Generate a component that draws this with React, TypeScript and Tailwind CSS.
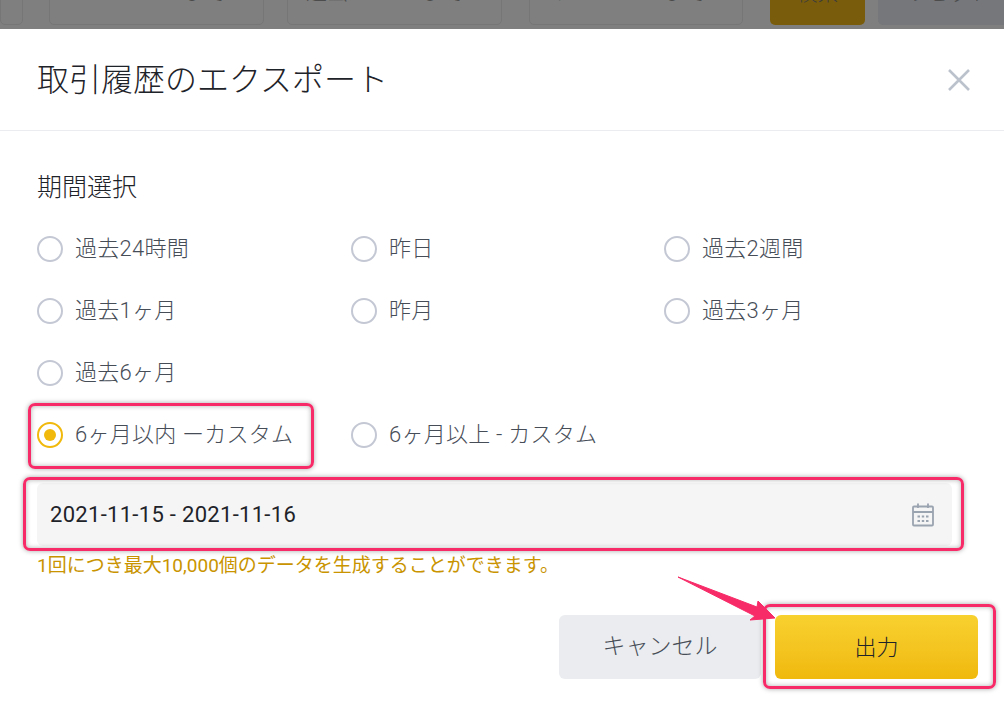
const jp = "font-['Roboto','Noto_Sans_CJK_JP',sans-serif]";

function Radio({ label, checked }: { label: string; checked?: boolean }) {
  return (
    <div className="flex items-center gap-[12px] h-[26px]">
      <span
        className={
          "flex items-center justify-center w-[26px] h-[26px] rounded-full border-2 bg-white " +
          (checked ? "border-[#f0b90b]" : "border-[#c4c8d4]")
        }
      >
        {checked && <span className="w-[12px] h-[12px] rounded-full bg-[#f0b90b]" />}
      </span>
      <span className="text-[22px] leading-[26px] tracking-[0.25px] text-[#474d57] font-light whitespace-nowrap">{label}</span>
    </div>
  );
}

function Frame({ className }: { className: string }) {
  return (
    <div
      className={
        "absolute rounded-[7px] border-[3px] border-[#f72b68] shadow-[0_0_5px_rgba(0,0,0,0.35),inset_0_0_5px_rgba(0,0,0,0.3)] pointer-events-none " +
        className
      }
    />
  );
}

function BackField({ a, b, w, aw }: { a: string; b: string; w: string; aw: string }) {
  return (
    <div className={"h-[40px] shrink-0 rounded-[5px] border border-[#767676] flex items-end pb-[20px] text-[21px] leading-[24px] text-[#4c4c4c] font-light " + w}>
      <span className={"whitespace-nowrap " + aw}>{a}</span>
      <span className="whitespace-nowrap">{b}</span>
    </div>
  );
}

export default function App() {
  return (
    <div className={"relative w-[1004px] h-[712px] overflow-hidden bg-white " + jp}>
      <div className="h-[29px] bg-[#7f7f7f] flex items-end pb-[4px] overflow-hidden">
        <div className="h-[40px] w-[23px] shrink-0 rounded-[5px] border border-[#767676]" />
        <div className="w-[26px] shrink-0" />
        <BackField a="から" b="まで" w="w-[215px]" aw="ml-[32px] w-[102px]" />
        <div className="w-[23px] shrink-0" />
        <BackField a="過去" b="まで" w="w-[215px]" aw="ml-[18px] w-[116px]" />
        <div className="w-[27px] shrink-0" />
        <BackField a="ライト" b="まで" w="w-[214px]" aw="ml-[22px] w-[112px]" />
        <div className="w-[27px] shrink-0" />
        <div className="h-[40px] w-[95px] shrink-0 rounded-[5px] bg-[#7a5d0c] flex items-end justify-center pb-[20px] text-[21px] leading-[24px] text-[#3c3c3c] font-light">検索</div>
        <div className="w-[13px] shrink-0" />
        <div className="h-[40px] w-[140px] shrink-0 rounded-[5px] bg-[#76777b] flex items-end justify-center pb-[20px] text-[21px] leading-[24px] text-[#4c4c4c] font-light">リセット</div>
      </div>

      <div className="absolute left-0 right-0 top-[29px] bottom-0 rounded-t-[6px] bg-white flex flex-col">
        <div className="h-[102px] border-b border-[#eaecef] flex items-center justify-between pl-[37px] pr-[30px]">
          <h1 className="text-[32px] leading-[40px] font-light text-[#1e2329]">取引履歴のエクスポート</h1>
          <svg width="30" height="30" viewBox="0 0 30 30" fill="none" stroke="#bcc2cc" strokeWidth="2.6">
            <path d="M5 5 L25 25 M25 5 L5 25" />
          </svg>
        </div>
        <div className="pl-[37px] pr-[37px] pt-[42px] flex flex-col">
          <div className="text-[25px] leading-[30px] font-light text-[#1e2329]">期間選択</div>
          <div className="grid grid-cols-[314px_313px_1fr] gap-y-[36px] mt-[33px]">
            <Radio label="過去24時間" />
            <Radio label="昨日" />
            <Radio label="過去2週間" />
            <Radio label="過去1ヶ月" />
            <Radio label="昨月" />
            <Radio label="過去3ヶ月" />
            <Radio label="過去6ヶ月" />
            <div />
            <div />
            <Radio label="6ヶ月以内 ーカスタム" checked />
            <Radio label="6ヶ月以上 - カスタム" />
          </div>
          <div className="mt-[35px] h-[63px] rounded-[6px] bg-[#f5f5f5] flex items-center justify-between pl-[13px] pr-[16px] w-[915px]">
            <span className="text-[22px] text-[#1e2329] tracking-[0.3px]">2021-11-15 - 2021-11-16</span>
            <svg width="26" height="26" viewBox="0 0 26 26" fill="none" stroke="#9aa3b0" strokeWidth="1.8">
              <rect x="3" y="4.5" width="20" height="19" rx="1" />
              <path d="M3 10 H23 M8 1.5 V6 M18 1.5 V6" />
              <path d="M7.5 14.5 H10 M11.8 14.5 H14.2 M16 14.5 H18.5 M7.5 19 H10 M11.8 19 H14.2 M16 19 H18.5" />
            </svg>
          </div>
          <div className="mt-[7px] text-[19px] leading-[26px] text-[#c99400]">1回につき最大10,000個のデータを生成することができます。</div>
        </div>
        <div className="absolute left-[559px] top-[586px] flex gap-[14px]">
          <button className="w-[202px] h-[64px] rounded-[6px] bg-[#eaecef] text-[23px] font-light text-[#474d57]">キャンセル</button>
          <button className="w-[203px] h-[64px] rounded-[6px] bg-gradient-to-b from-[#f8d12f] to-[#f0b90b] text-[22px] font-light text-[#1e2329]">出力</button>
        </div>
      </div>

      <Frame className="left-[28px] top-[403px] w-[286px] h-[66px]" />
      <Frame className="left-[23px] top-[477px] w-[941px] h-[74px]" />
      <Frame className="left-[763px] top-[604px] w-[233px] h-[85px]" />
      <svg className="absolute left-[670px] top-[570px]" width="120" height="60" viewBox="0 0 120 60">
        <path d="M8 7 L87 37 L88 31 L105 48 L80 50 L85 46 Z" fill="#f72b68" stroke="#f72b68" strokeWidth="1" strokeLinejoin="round" />
      </svg>
    </div>
  );
}
